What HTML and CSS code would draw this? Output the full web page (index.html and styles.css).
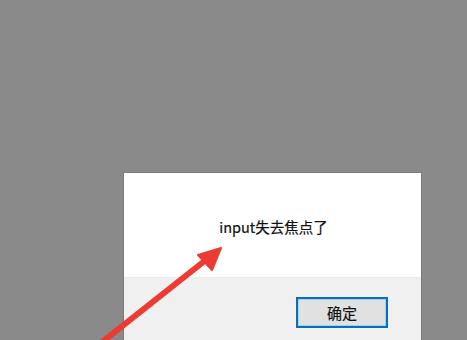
FILE: index.html
```html
<!DOCTYPE html>
<html lang="zh">
<head>
<meta charset="utf-8">
<link rel="stylesheet" href="styles.css">
</head>
<body>
<div class="dialog">
  <div class="dialog-body">
    <p class="message">input失去焦点了</p>
  </div>
  <div class="dialog-footer">
    <button class="ok-btn">确定</button>
  </div>
</div>
<svg class="annotation" width="467" height="340" viewBox="0 0 467 340">
  <line x1="92" y1="350" x2="207" y2="259" stroke="#ec3b33" stroke-width="6" stroke-linecap="round"/>
  <polygon points="221,248 198,255 212,270" fill="#ec3b33" stroke="#ec3b33" stroke-width="2" stroke-linejoin="round"/>
</svg>
</body>
</html>
```

FILE: styles.css
```css
html, body {
  margin: 0;
  padding: 0;
}
body {
  width: 467px;
  height: 340px;
  overflow: hidden;
  background: #8a8a8a;
  font-family: "Noto Sans CJK SC", "Noto Sans", sans-serif;
  position: relative;
}
.dialog {
  box-sizing: border-box;
  margin: 172px 0 0 123px;
  width: 299px;
  height: 168px;
  border: 1px solid #7a7a7a;
  border-bottom: none;
  background: #ffffff;
  display: flex;
  flex-direction: column;
}
.dialog-body {
  height: 104px;
  display: flex;
  align-items: center;
  justify-content: center;
  background: #ffffff;
}
.message {
  margin: 4px 0 0 0;
  font-size: 14.5px;
  color: #111;
  line-height: 1;
  padding-left: 2px;
  -webkit-text-stroke: 0.2px #111;
}
.dialog-footer {
  flex: 1;
  background: #f0f0f0;
  border-top: 1px solid #ececec;
  display: flex;
  justify-content: flex-end;
  align-items: flex-start;
  padding: 19px 33px 0 0;
}
.ok-btn {
  width: 92px;
  height: 31px;
  background: #e1e1e1;
  border: 2px solid #0a6fb8;
  box-shadow: inset 0 0 0 1px #9fd1f2;
  font-family: "Noto Sans CJK SC", sans-serif;
  font-size: 15px;
  color: #111;
  padding: 0;
  -webkit-text-stroke: 0.2px #111;
}
.annotation {
  position: absolute;
  left: 0;
  top: 0;
}
```
